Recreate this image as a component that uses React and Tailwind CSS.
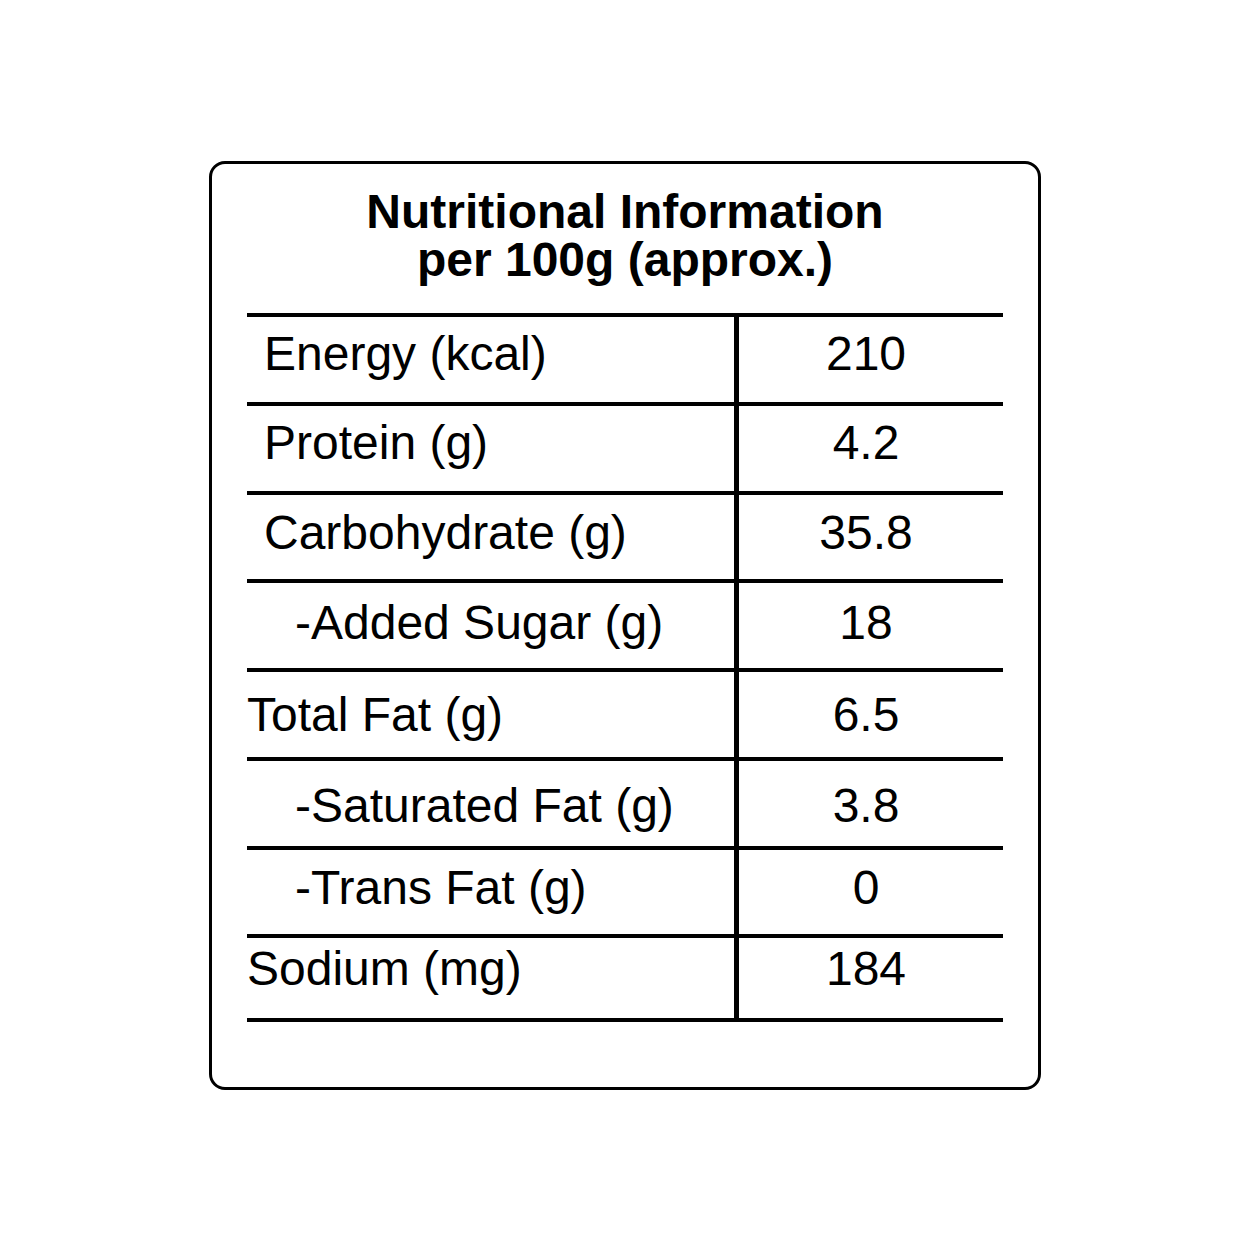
export default function App() {
  const rows = [
    { label: 'Energy (kcal)', value: '210', h: 'h-[89px]', pad: 'pl-[17px]', pt: 'pt-[13px]' },
    { label: 'Protein (g)', value: '4.2', h: 'h-[89px]', pad: 'pl-[17px]', pt: 'pt-[13px]' },
    { label: 'Carbohydrate (g)', value: '35.8', h: 'h-[88px]', pad: 'pl-[17px]', pt: 'pt-[14px]' },
    { label: '-Added Sugar (g)', value: '18', h: 'h-[89px]', pad: 'pl-[48px]', pt: 'pt-[16px]' },
    { label: 'Total Fat (g)', value: '6.5', h: 'h-[89px]', pad: 'pl-0', pt: 'pt-[19px]' },
    { label: '-Saturated Fat (g)', value: '3.8', h: 'h-[89px]', pad: 'pl-[48px]', pt: 'pt-[21px]' },
    { label: '-Trans Fat (g)', value: '0', h: 'h-[88px]', pad: 'pl-[48px]', pt: 'pt-[14px]' },
    { label: 'Sodium (mg)', value: '184', h: 'h-[84px]', pad: 'pl-0', pt: 'pt-[7px]' },
  ];

  return (
    <div
      className="min-h-[1250px] bg-white flex items-center justify-center text-black"
      style={{ fontFamily: '"Liberation Sans", Arial, sans-serif' }}
    >
      <div className="w-[832px] h-[929px] border-[3px] border-black rounded-[16px] px-[35px] pt-[24px]">
        <h1 className="text-[48px] leading-[48px] font-bold text-center">
          Nutritional Information
          <br />
          per 100g (approx.)
        </h1>

        <div className="mt-[29px] border-t-4 border-black">
          {rows.map((r) => (
            <div key={r.label} className={`${r.h} flex border-b-4 border-black`}>
              <div className={`w-[492px] border-r-[5px] border-black ${r.pad} ${r.pt} text-[48px] leading-[48px] whitespace-nowrap`}>
                {r.label}
              </div>
              <div className={`flex-1 text-center pr-[10px] ${r.pt} text-[48px] leading-[48px]`}>
                {r.value}
              </div>
            </div>
          ))}
        </div>
      </div>
    </div>
  );
}
